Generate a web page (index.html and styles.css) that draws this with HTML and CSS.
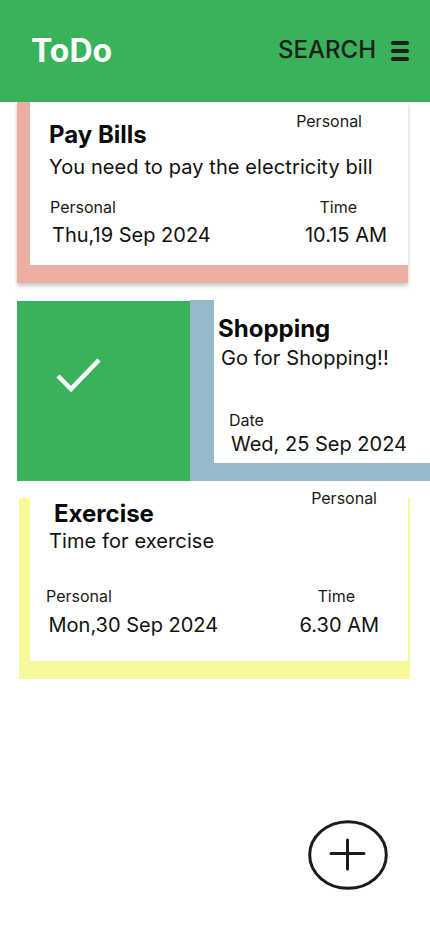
FILE: index.html
```html
<!DOCTYPE html>
<html lang="en">
<head>
<meta charset="utf-8">
<title>ToDo</title>
<link rel="stylesheet" href="styles.css">
</head>
<body>
<header class="topbar">
  <div class="brand">ToDo</div>
  <div class="actions">
    <span class="search">SEARCH</span>
    <span class="burger"><i></i><i></i><i></i></span>
  </div>
</header>

<main class="list">
  <section class="card card-pink">
    <div class="card-head">
      <h2 class="title">Pay Bills</h2>
      <span class="tag">Personal</span>
    </div>
    <p class="desc">You need to pay the electricity bill</p>
    <div class="meta">
      <div class="meta-col">
        <span class="label label-left">Personal</span>
        <span class="value value-left">Thu,19 Sep 2024</span>
      </div>
      <div class="meta-col meta-right">
        <span class="label label-time">Time</span>
        <span class="value">10.15 AM</span>
      </div>
    </div>
  </section>

  <section class="swipe">
    <div class="swipe-action">
      <svg class="check" width="46" height="36" viewBox="0 0 46 36"><path d="M2 19 L15 32 L43 3" fill="none" stroke="#fff" stroke-width="4.5"/></svg>
    </div>
    <div class="card card-blue">
      <h2 class="title title-shop">Shopping</h2>
      <p class="desc desc-shop">Go for Shopping!!</p>
      <span class="label label-date">Date</span>
      <span class="value value-date">Wed, 25 Sep 2024</span>
    </div>
  </section>

  <section class="card card-yellow">
    <div class="card-head head-ex">
      <h2 class="title title-ex">Exercise</h2>
      <span class="tag tag-ex">Personal</span>
    </div>
    <p class="desc desc-ex">Time for exercise</p>
    <div class="meta meta-ex">
      <div class="meta-col">
        <span class="label">Personal</span>
        <span class="value value-ex">Mon,30 Sep 2024</span>
      </div>
      <div class="meta-col meta-right">
        <span class="label label-time-ex">Time</span>
        <span class="value">6.30 AM</span>
      </div>
    </div>
  </section>
</main>

<button class="fab" aria-label="Add">
  <svg width="80" height="70" viewBox="0 0 80 70">
    <ellipse cx="40" cy="35" rx="38.3" ry="33.3" fill="none" stroke="#1b1b1b" stroke-width="3"/>
    <path d="M23 33.5 H56 M39.5 20 V49" stroke="#1b1b1b" stroke-width="3" stroke-linecap="round"/>
  </svg>
</button>
</body>
</html>
```

FILE: styles.css
```css
* { box-sizing: border-box; }
html, body { margin: 0; padding: 0; }
body {
  width: 430px;
  height: 932px;
  overflow: hidden;
  background: #fff;
  font-family: Inter, "Noto Sans", sans-serif;
  color: #111;
}
h2, p { margin: 0; }

.topbar {
  height: 102px;
  background: #38b35a;
  display: flex;
  align-items: center;
  justify-content: space-between;
  padding: 0 21px 0 31px;
  position: relative;
  z-index: 2;
}
.brand {
  color: #fff;
  font-weight: 700;
  font-size: 32px;
  line-height: 38px;
  margin-top: -1px;
}
.actions {
  display: flex;
  align-items: center;
  gap: 15px;
}
.search {
  color: #1e1e1e;
  font-weight: 500;
  font-size: 24px;
  line-height: 28px;
  margin-top: -2px;
}
.burger {
  display: flex;
  flex-direction: column;
  gap: 4px;
  width: 18px;
  margin-top: -1px;
}
.burger i {
  display: block;
  height: 4px;
  border-radius: 2px;
  background: #1e1e1e;
}

.list {
  display: flex;
  flex-direction: column;
  gap: 17px;
}

.card { background: #fff; }
.title {
  font-size: 24px;
  line-height: 29px;
  font-weight: 700;
  color: #0a0a0a;
}
.tag, .label {
  font-size: 16px;
  line-height: 19px;
  color: #1a1a1a;
}
.desc {
  font-size: 20px;
  line-height: 24px;
  letter-spacing: 0.1px;
  color: #111;
}
.value {
  font-size: 20px;
  line-height: 24px;
  color: #111;
}
.card-head {
  display: flex;
  justify-content: space-between;
  align-items: flex-start;
}
.meta {
  display: flex;
  justify-content: space-between;
}
.meta-col {
  display: flex;
  flex-direction: column;
  gap: 6px;
}
.meta-right { align-items: flex-end; }

/* card 1 */
.card-pink {
  margin-left: 17px;
  width: 391px;
  border-left: 13px solid #eaaea2;
  border-bottom: 18px solid #eaaea2;
  box-shadow: 0 3px 4px rgba(0, 0, 0, 0.22);
  padding: 10px 21px 18px 19px;
}
.card-pink .title { margin-top: 7.5px; }
.card-pink .tag { margin-right: 25px; }
.card-pink .desc { margin-top: 6.5px; }
.card-pink .meta { margin-top: 19px; }
.label-left { margin-left: 1px; }
.value-left { margin-left: 3px; }
.label-time { margin-right: 30px; }

/* card 2 swiped */
.swipe {
  margin-left: 17px;
  display: flex;
  overflow: hidden;
  height: 181px;
}
.swipe-action {
  flex: none;
  width: 173px;
  margin-top: 1px;
  background: #38b35a;
  padding: 56px 0 0 39px;
}
.check { display: block; }
.card-blue {
  flex: none;
  width: 391px;
  border-left: 24px solid #97bacb;
  border-bottom: 18px solid #97bacb;
  padding: 13.5px 0 0 4px;
  display: flex;
  flex-direction: column;
  align-items: flex-start;
}
.desc-shop { margin: 3px 0 0 3px; }
.label-date { margin: 41px 0 0 11px; }
.value-date { margin: 2px 0 0 13px; }

/* card 3 */
.card-yellow {
  margin-left: 19px;
  width: 391px;
  border-left: 11px solid #f8f99a;
  border-right: 2px solid #f8f99a;
  border-bottom: 18px solid #f8f99a;
  padding: 0 29px 24px 16px;
}
.head-ex { margin-top: -9.3px; }
.title-ex { margin: 9.8px 0 0 8px; }
.tag-ex { margin-right: 2px; }
.desc-ex { margin: 1px 0 0 3px; }
.meta-ex { margin-top: 34.5px; }
.meta-ex .meta-col { gap: 7px; }
.value-ex { margin-left: 2.5px; }
.label-time-ex { margin-right: 24px; }

.fab {
  position: fixed;
  right: 42px;
  bottom: 42px;
  width: 80px;
  height: 70px;
  padding: 0;
  border: 0;
  background: transparent;
  cursor: pointer;
}
.fab svg { display: block; }
```
